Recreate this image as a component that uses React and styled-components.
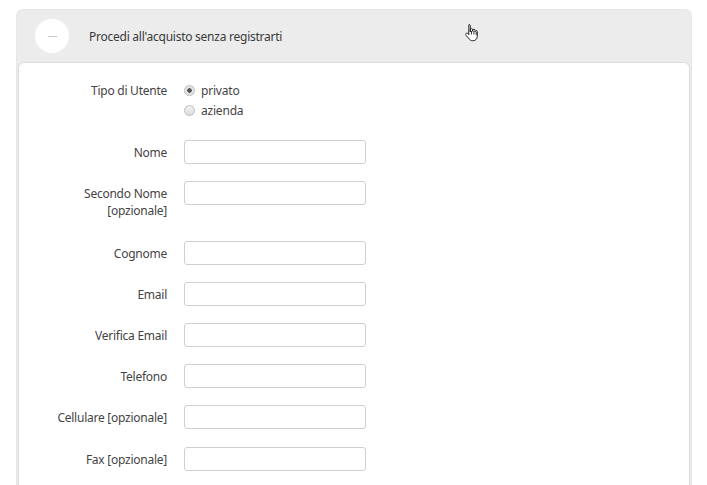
import styled, { createGlobalStyle } from 'styled-components';

const GlobalStyle = createGlobalStyle`
  html, body {
    margin: 0;
    padding: 0;
    background: #fff;
    font-family: "Noto Sans", "Open Sans", sans-serif;
    color: #444;
  }
`;

const fields = [
  { label: 'Nome' },
  { label: ['Secondo Nome', '[opzionale]'] },
  { label: 'Cognome' },
  { label: 'Email' },
  { label: 'Verifica Email' },
  { label: 'Telefono' },
  { label: 'Cellulare [opzionale]' },
  { label: 'Fax [opzionale]' },
];

const App = () => {
  return (
    <>
      <GlobalStyle />
      <Page>
        <Panel>
          <PanelHeader>
            <ToggleCircle>
              <Minus />
            </ToggleCircle>
            <HeaderTitle>Procedi all'acquisto senza registrarti</HeaderTitle>
            <Cursor />
          </PanelHeader>
          <Card>
            <FormRow>
              <Label>Tipo di Utente</Label>
              <RadioGroup>
                <RadioOption>
                  <Radio checked />
                  privato
                </RadioOption>
                <RadioOption>
                  <Radio />
                  azienda
                </RadioOption>
              </RadioGroup>
            </FormRow>
            {fields.map((f, i) => {
              const multi = Array.isArray(f.label);
              return (
                <FormRow key={i}>
                  <Label $multi={multi}>
                    {multi ? f.label.map((l, j) => <span key={j}>{l}</span>) : f.label}
                  </Label>
                  <Input type="text" />
                </FormRow>
              );
            })}
          </Card>
        </Panel>
      </Page>
    </>
  );
};

export default App;

const Cursor = () => (
  <CursorWrap>
    <svg width="16" height="20" viewBox="0 0 16 20">
      <path
        d="M5 1.5c.8 0 1.3.6 1.3 1.3v6.2V6.8c0-.7.5-1.2 1.2-1.2s1.2.5 1.2 1.2v1.5-.9c0-.7.5-1.2 1.2-1.2s1.2.5 1.2 1.2v1.3c0-.6.5-1.1 1.1-1.1s1.1.5 1.1 1.1v4.6c0 2.6-1.700 4.4-4.2 4.4H8.4c-1.5 0-2.4-.6-3.3-1.8L2 12.3c-.5-.7-.4-1.5.2-1.9.6-.4 1.3-.3 1.8.3l.8 1V2.8c0-.7.3-1.3.2-1.3z"
        fill="#fff"
        stroke="#222"
        strokeWidth="1"
        strokeLinejoin="round"
      />
      <path d="M7.5 8v3.5M9.9 8v3.5M12.2 9v3" stroke="#222" strokeWidth="0.9" />
    </svg>
  </CursorWrap>
);

const Page = styled.div`
  padding: 10px 16px 0 17px;
  height: 485px;
  box-sizing: border-box;
  overflow: hidden;
`;

const Panel = styled.div`
  width: 674px;
  background: #ececec;
  border-radius: 6px 6px 0 0;
  box-shadow: 0 0 0 1px #e6e6e6;
  padding: 0 1px;
  height: 480px;
  box-sizing: border-box;
`;

const PanelHeader = styled.div`
  position: relative;
  display: flex;
  align-items: center;
  height: 52px;
  padding-left: 17px;
`;

const ToggleCircle = styled.div`
  width: 34px;
  height: 34px;
  border-radius: 50%;
  background: #fff;
  display: flex;
  align-items: center;
  justify-content: center;
  flex-shrink: 0;
`;

const Minus = styled.span`
  width: 9px;
  height: 1px;
  background: #c8c8c8;
`;

const HeaderTitle = styled.div`
  margin-left: 20px;
  font-size: 12px;
  letter-spacing: -0.25px;
  color: #3a3a3a;
`;

const CursorWrap = styled.div`
  position: absolute;
  left: 446px;
  top: 13px;
  line-height: 0;
`;

const Card = styled.div`
  background: #fff;
  border: 1px solid #dcdcdc;
  border-bottom: none;
  border-radius: 6px 6px 0 0;
  padding-top: 15px;
  height: 100%;
  box-sizing: border-box;
`;

const FormRow = styled.div`
  display: flex;
  align-items: flex-start;
  gap: 17px;
  margin-bottom: 17.2px;
`;

const Label = styled.div`
  width: 148px;
  text-align: right;
  font-size: 12px;
  letter-spacing: -0.25px;
  line-height: 17px;
  padding: 4px 0 ${(p) => (p.$multi ? '4px' : '3px')};
  color: #444;
  display: flex;
  flex-direction: column;
`;

const RadioGroup = styled.div`
  display: flex;
  flex-direction: column;
  padding: 2px 0 3px;
`;

const RadioOption = styled.label`
  display: flex;
  align-items: center;
  height: 20px;
  font-size: 12px;
  letter-spacing: -0.2px;
  color: #444;
  gap: 6px;
`;

const Radio = styled.span`
  width: 9px;
  height: 9px;
  border-radius: 50%;
  border: 1px solid #bdbdbd;
  background: ${(p) =>
    p.checked
      ? 'radial-gradient(circle, #555 0 2px, #e4e4e4 2.5px)'
      : 'linear-gradient(#f2f2f2, #dcdcdc)'};
`;

const Input = styled.input`
  width: 182px;
  height: 24px;
  box-sizing: border-box;
  border: 1px solid #cfcfcf;
  border-radius: 3px;
  background: #fff;
  margin: 0;
  padding: 3px 6px;
  font-family: inherit;
  font-size: 12px;
  outline: 0;
`;
